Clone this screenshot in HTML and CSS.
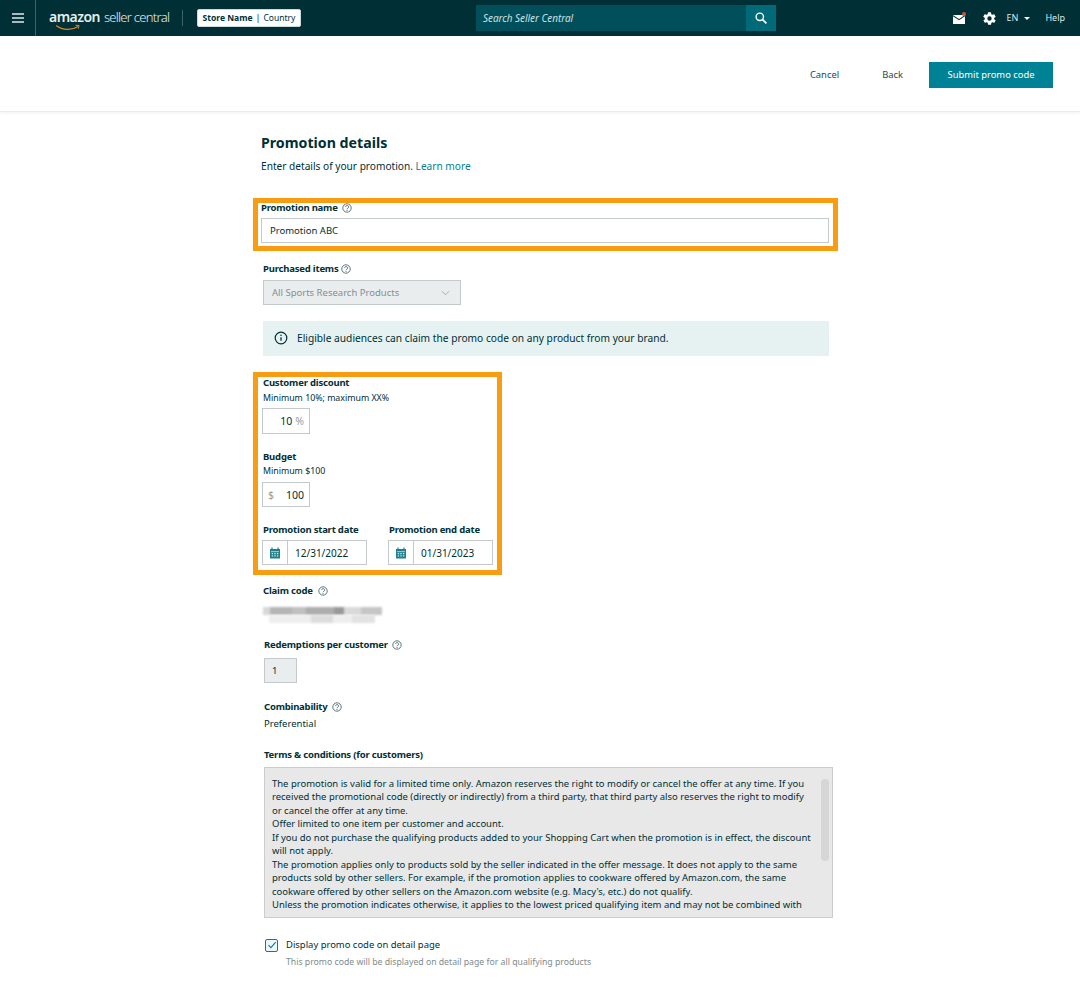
FILE: index.html
```html
<!DOCTYPE html>
<html lang="en">
<head>
<meta charset="utf-8">
<title>Promotion details</title>
<link rel="stylesheet" href="styles.css">
</head>
<body>
<header class="topbar">
  <div class="menu-cell">
    <svg class="menu-icon" viewBox="0 0 12 10" width="12" height="10"><path d="M0 1h12M0 5h12M0 9h12" stroke="#dfe9ea" stroke-width="1.6"/></svg>
  </div>
  <div class="logo">
    <span class="logo-amazon">amazon</span><span class="logo-seller">seller central</span>
    <svg class="logo-smile" viewBox="0 0 26 8" width="26" height="8"><path d="M1 1.5C8 6.5 17 6.5 23 2.5" fill="none" stroke="#d58a2a" stroke-width="1.1"/><path d="M20.5 1.2l3.6.3-.9 3.2" fill="none" stroke="#d58a2a" stroke-width="1"/></svg>
  </div>
  <div class="logo-divider"></div>
  <div class="store-chip"><b>Store Name</b><span class="chip-sep">|</span><span>Country</span></div>
  <div class="search">
    <span class="search-text">Search Seller Central</span>
    <span class="search-btn">
      <svg viewBox="0 0 12 12" width="12" height="12"><circle cx="4.8" cy="4.8" r="3.7" fill="none" stroke="#fff" stroke-width="1.4"/><path d="M7.6 7.6l3.8 3.8" stroke="#fff" stroke-width="1.6"/></svg>
    </span>
  </div>
  <div class="top-right">
    <svg class="mail" viewBox="0 0 13 12" width="13" height="12"><path d="M0 3h12v9H0z" fill="#fff"/><path d="M0 3.6l6 4 6-4" fill="none" stroke="#002f36" stroke-width="1.1"/><circle cx="11" cy="2" r="2" fill="#c5553d"/></svg>
    <svg class="gear" viewBox="0 0 24 24" width="15" height="15"><path fill="#fff" fill-rule="evenodd" d="M19.4 13a7.6 7.6 0 0 0 0-2l2.1-1.6a.5.5 0 0 0 .1-.7l-2-3.4a.5.5 0 0 0-.6-.2l-2.5 1a7.4 7.4 0 0 0-1.7-1l-.4-2.7a.5.5 0 0 0-.5-.4h-4a.5.5 0 0 0-.5.4l-.4 2.7a7.4 7.4 0 0 0-1.7 1l-2.5-1a.5.5 0 0 0-.6.2l-2 3.4a.5.5 0 0 0 .1.7L4.6 11a7.6 7.6 0 0 0 0 2l-2.1 1.6a.5.5 0 0 0-.1.7l2 3.4c.1.2.4.3.6.2l2.5-1c.5.4 1.1.7 1.7 1l.4 2.7c0 .2.3.4.5.4h4c.2 0 .5-.2.5-.4l.4-2.7c.6-.3 1.2-.6 1.7-1l2.5 1c.2.1.5 0 .6-.2l2-3.4a.5.5 0 0 0-.1-.7zM12 15.5a3.5 3.5 0 1 1 0-7 3.5 3.5 0 0 1 0 7z"/></svg>
    <span class="lang">EN</span>
    <span class="caret"></span>
    <span class="help">Help</span>
  </div>
</header>

<div class="actions">
  <a class="action-link action-cancel">Cancel</a>
  <a class="action-link action-back">Back</a>
  <button class="submit">Submit promo code</button>
</div>

<main class="form">
  <h1 class="title">Promotion details</h1>
  <p class="intro">Enter details of your promotion. <a class="link">Learn more</a></p>

  <section class="hl hl-name">
    <div class="label">Promotion name <svg class="q" viewBox="0 0 10 10" width="10" height="10"><use href="#qm"/></svg></div>
    <div class="input input-name">Promotion ABC</div>
  </section>

  <div class="label label-purchased">Purchased items <svg class="q q-tight" viewBox="0 0 10 10" width="10" height="10"><use href="#qm"/></svg></div>
  <div class="select">
    <span>All Sports Research Products</span>
    <svg viewBox="0 0 10 6" width="9" height="6"><path d="M1 1l4 4 4-4" fill="none" stroke="#a0a8a9" stroke-width="1"/></svg>
  </div>

  <div class="info">
    <svg viewBox="0 0 14 14" width="14" height="14"><circle cx="7" cy="7" r="5.8" fill="none" stroke="#002f36" stroke-width="1.2"/><path d="M7 6.2v3.6" stroke="#002f36" stroke-width="1.3"/><circle cx="7" cy="4.2" r=".8" fill="#002f36"/></svg>
    <span>Eligible audiences can claim the promo code on any product from your brand.</span>
  </div>

  <section class="hl hl-terms">
    <div class="label label-inset">Customer discount</div>
    <div class="sub">Minimum 10%; maximum XX%</div>
    <div class="input num"><span class="val val-pct">10</span><span class="unit">%</span></div>

    <div class="label label-inset label-budget">Budget</div>
    <div class="sub sub-budget">Minimum $100</div>
    <div class="input num num-budget"><span class="unit">$</span><span class="val val-usd">100</span></div>

    <div class="dates">
      <div class="date-col">
        <div class="label label-inset">Promotion start date</div>
        <div class="date">
          <span class="cal"><svg viewBox="0 0 12 12" width="12" height="12"><use href="#cal"/></svg></span>
          <span class="date-val">12/31/2022</span>
        </div>
      </div>
      <div class="date-col">
        <div class="label label-inset">Promotion end date</div>
        <div class="date">
          <span class="cal"><svg viewBox="0 0 12 12" width="12" height="12"><use href="#cal"/></svg></span>
          <span class="date-val">01/31/2023</span>
        </div>
      </div>
    </div>
  </section>

  <div class="label label-claim">Claim code <svg class="q q-claim" viewBox="0 0 10 10" width="10" height="10"><use href="#qm"/></svg></div>
  <div class="blur-code">
    <div class="blur-row blur-row-a"></div>
    <div class="blur-row blur-row-b"></div>
  </div>

  <div class="label label-red">Redemptions per customer <svg class="q" viewBox="0 0 10 10" width="10" height="10"><use href="#qm"/></svg></div>
  <div class="input red-input">1</div>

  <div class="label label-comb">Combinability <svg class="q" viewBox="0 0 10 10" width="10" height="10"><use href="#qm"/></svg></div>
  <div class="pref">Preferential</div>

  <div class="label label-tc">Terms &amp; conditions (for customers)</div>
  <div class="terms">
    <p>The promotion is valid for a limited time only. Amazon reserves the right to modify or cancel the offer at any time. If you<br>
    received the promotional code (directly or indirectly) from a third party, that third party also reserves the right to modify<br>
    or cancel the offer at any time.<br>
    Offer limited to one item per customer and account.<br>
    If you do not purchase the qualifying products added to your Shopping Cart when the promotion is in effect, the discount<br>
    will not apply.<br>
    The promotion applies only to products sold by the seller indicated in the offer message. It does not apply to the same<br>
    products sold by other sellers. For example, if the promotion applies to cookware offered by Amazon.com, the same<br>
    cookware offered by other sellers on the Amazon.com website (e.g. Macy's, etc.) do not qualify.<br>
    Unless the promotion indicates otherwise, it applies to the lowest priced qualifying item and may not be combined with</p>
    <span class="thumb"></span>
  </div>

  <div class="check-row">
    <span class="check"><svg viewBox="0 0 10 10" width="10" height="10"><path d="M1.5 5.2l2.4 2.4 4.8-5.4" fill="none" stroke="#008296" stroke-width="1.1"/></svg></span>
    <span class="check-label">Display promo code on detail page</span>
  </div>
  <div class="check-sub">This promo code will be displayed on detail page for all qualifying products</div>
</main>

<svg class="defs" width="0" height="0">
  <defs>
    <g id="qm"><circle cx="5" cy="5" r="4.2" fill="none" stroke="#33565c" stroke-width=".8"/><path d="M3.6 4a1.5 1.4 0 1 1 2.3 1.2c-.6.4-.9.6-.9 1.1" fill="none" stroke="#33565c" stroke-width=".8"/><circle cx="5" cy="7.6" r=".5" fill="#33565c"/></g>
    <g id="cal"><path d="M1 2h10v9.5H1z" fill="#1f7f8c"/><path d="M3 .5v2.5M9 .5v2.5" stroke="#1f7f8c" stroke-width="1.2"/><path d="M2 4.4h8v.7H2z" fill="#e6f2f2"/><path d="M2.7 6h1.4v1.2H2.7zM5.3 6h1.4v1.2H5.3zM7.9 6h1.4v1.2H7.9zM2.7 8.2h1.4v1.2H2.7zM5.3 8.2h1.4v1.2H5.3zM7.9 8.2h1.4v1.2H7.9z" fill="#cfe6e8"/></g>
  </defs>
</svg>
</body>
</html>
```

FILE: styles.css
```css
* { box-sizing: border-box; }
html, body { margin: 0; padding: 0; }
body {
  width: 1080px;
  height: 990px;
  overflow: hidden;
  background: #fff;
  color: #002f36;
  font-family: "Noto Sans", "Open Sans", sans-serif;
  font-size: 10px;
  line-height: 14px;
}
p { margin: 0; }

.topbar {
  height: 36px;
  background: #002f36;
  display: flex;
  align-items: center;
  color: #fff;
}
.menu-cell {
  width: 36px;
  height: 36px;
  border-right: 1px solid #3f6369;
  display: flex;
  align-items: center;
  justify-content: center;
}
.logo {
  position: relative;
  margin: -3px 0 0 13px;
  width: 133px;
  display: flex;
  align-items: baseline;
  color: #e3eeee;
  white-space: nowrap;
}
.logo-amazon { font-size: 14px; font-weight: 600; letter-spacing: -.55px; margin-right: 4px; }
.logo-seller { font-size: 13px; font-weight: 300; letter-spacing: -.72px; }
.logo-smile { position: absolute; left: 6px; top: 14px; }
.logo-divider { width: 1px; height: 16px; background: #3f6369; margin-left: 0; }
.store-chip {
  margin-left: 14px;
  width: 104px;
  height: 18px;
  background: #fff;
  border: 1px solid #c9dadc;
  border-radius: 2px;
  color: #002f36;
  font-size: 8.5px;
  display: flex;
  align-items: center;
  justify-content: center;
  gap: 3px;
}
.chip-sep { font-size: 9px; }
.search {
  margin-left: 175px;
  width: 300px;
  height: 26px;
  background: #004f5b;
  display: flex;
  align-items: center;
  justify-content: space-between;
  padding-left: 7px;
}
.search-text { font-style: italic; font-size: 9.9px; color: #cfe0e2; }
.search-btn {
  width: 30px;
  height: 26px;
  background: #006a78;
  display: flex;
  align-items: center;
  justify-content: center;
}
.top-right {
  margin-left: auto;
  padding-right: 15px;
  display: flex;
  align-items: center;
  font-size: 9px;
  color: #dfe9ea;
}
.gear { margin-left: 16px; }
.lang { margin-left: 10px; }
.caret {
  margin-left: 6px;
  border-left: 3px solid transparent;
  border-right: 3px solid transparent;
  border-top: 3px solid #fff;
}
.help { margin-left: 15px; }

.actions {
  height: 76px;
  display: flex;
  align-items: center;
  justify-content: flex-end;
  padding: 2px 27px 0 0;
  border-bottom: 1px solid #ececec;
  box-shadow: 0 1px 3px rgba(0,0,0,.06);
}
.action-link { font-size: 9.4px; color: #1e4a50; }
.action-cancel { margin-right: 43px; }
.action-back { margin-right: 26px; }
.submit {
  width: 124px;
  height: 26px;
  border: 0;
  background: #008296;
  color: #fff;
  font: inherit;
  font-size: 9.4px;
}

.form {
  margin-left: 253px;
  width: 585px;
  padding-top: 21px;
}
.title { margin: 0 0 0 8px; font-size: 14.2px; line-height: 20px; font-weight: 700; color: #002f36; }
.intro { margin: 6px 0 0 8px; font-size: 10.15px; line-height: 14px; }
.link { color: #008296; }

.label { font-weight: 700; font-size: 9.5px; letter-spacing: -.2px; line-height: 12px; color: #002f36; white-space: nowrap; }
.q { vertical-align: -2px; margin-left: 2px; }
.q-tight { margin-left: 0; }
.q-claim { margin-left: 3px; }

.hl { border: 5px solid #f89c12; }
.hl-name { margin-top: 25px; width: 585px; height: 53px; padding: 0 4px 0 3px; }
.hl-name .label { line-height: 10px; }
.input {
  height: 25px;
  border: 1px solid #c4cacb;
  background: #fff;
  font-size: 9.5px;
  display: flex;
  align-items: center;
}
.input-name { margin-top: 5px; width: 568px; padding-left: 8px; }

.label-purchased { margin: 12px 0 0 10px; }
.select {
  margin: 5px 0 0 10px;
  width: 198px;
  height: 25px;
  background: #eaeded;
  border: 1px solid #c4cacb;
  color: #848f91;
  font-size: 9.5px;
  display: flex;
  align-items: center;
  justify-content: space-between;
  padding: 0 10px 0 8px;
}
.info {
  margin: 16px 0 0 10px;
  width: 566px;
  height: 35px;
  background: #e6f2f2;
  display: flex;
  align-items: center;
  gap: 9px;
  padding: 0 0 2px 11px;
  font-size: 10.2px;
}

.hl-terms { margin-top: 16px; width: 249px; height: 203px; padding: 0 0 0 4px; }
.label-inset { margin-left: 1px; }
.sub { font-size: 8.8px; line-height: 14px; margin: 2px 0 0 1px; }
.sub-budget { margin-top: 1px; }
.num { margin-top: 3px; width: 48px; height: 26px; font-size: 10.5px; justify-content: space-between; padding: 0 5px; }
.num-budget { margin-top: 4px; height: 25px; }
.unit { color: #979fa0; }
.val-pct { margin-left: auto; margin-right: 3px; }
.val-usd { margin-left: auto; margin-right: 0; }
.label-budget { margin-top: 17px; }
.dates { display: flex; gap: 21px; margin-top: 17px; }
.date-col { width: 105px; }
.date {
  margin-top: 4px;
  height: 25px;
  border: 1px solid #c4cacb;
  display: flex;
  align-items: center;
  font-size: 10px;
}
.cal {
  width: 25px;
  height: 23px;
  border-right: 1px solid #c4cacb;
  display: flex;
  align-items: center;
  justify-content: center;
}
.date-val { margin-left: 7px; }

.label-claim { margin: 10px 0 0 10px; }
.blur-code { margin: 10px 0 0 10px; width: 119px; height: 16px; }
.blur-row { height: 8px; filter: blur(.8px); }
.blur-row-a {
  background: linear-gradient(90deg, #d8d8d8 0 6%, #b5b5b5 6% 24%, #c0c0c0 24% 36%, #adadad 36% 60%, #999 60% 68%, #d9d9d9 68% 82%, #c6c6c6 82% 100%);
}
.blur-row-b {
  margin-left: 6px;
  width: 106px;
  background: linear-gradient(90deg, #eee 0 40%, #dcdcdc 40% 60%, #eee 60% 78%, #e2e2e2 78% 100%);
}

.label-red { margin: 16px 0 0 11px; }
.red-input { margin: 7px 0 0 11px; width: 33px; background: #eaeded; padding-left: 7px; }
.label-comb { margin: 18px 0 0 11px; }
.pref { margin: 4px 0 0 11px; font-size: 9.5px; }
.label-tc { margin: 18px 0 0 11px; }

.terms {
  position: relative;
  margin: 6px 0 0 11px;
  width: 569px;
  height: 151px;
  background: #e8e8e8;
  border: 1px solid #c9cdcd;
  padding: 9px 0 0 7px;
  font-size: 9.47px;
  line-height: 13.45px;
  white-space: nowrap;
  overflow: hidden;
}
.thumb {
  position: absolute;
  left: 556px;
  top: 11px;
  width: 8px;
  height: 82px;
  border-radius: 4px;
  background: #d6d6d6;
}

.check-row { display: flex; align-items: center; margin: 20px 0 0 12px; }
.check {
  width: 13px;
  height: 13px;
  border: 1px solid #008296;
  border-radius: 2px;
  background: #eef7f8;
  display: flex;
  align-items: center;
  justify-content: center;
}
.check-label { margin-left: 8px; font-size: 9.45px; }
.check-sub { margin: 3px 0 0 33px; font-size: 8.7px; color: #7d8b8d; }
.defs { position: absolute; }
```
